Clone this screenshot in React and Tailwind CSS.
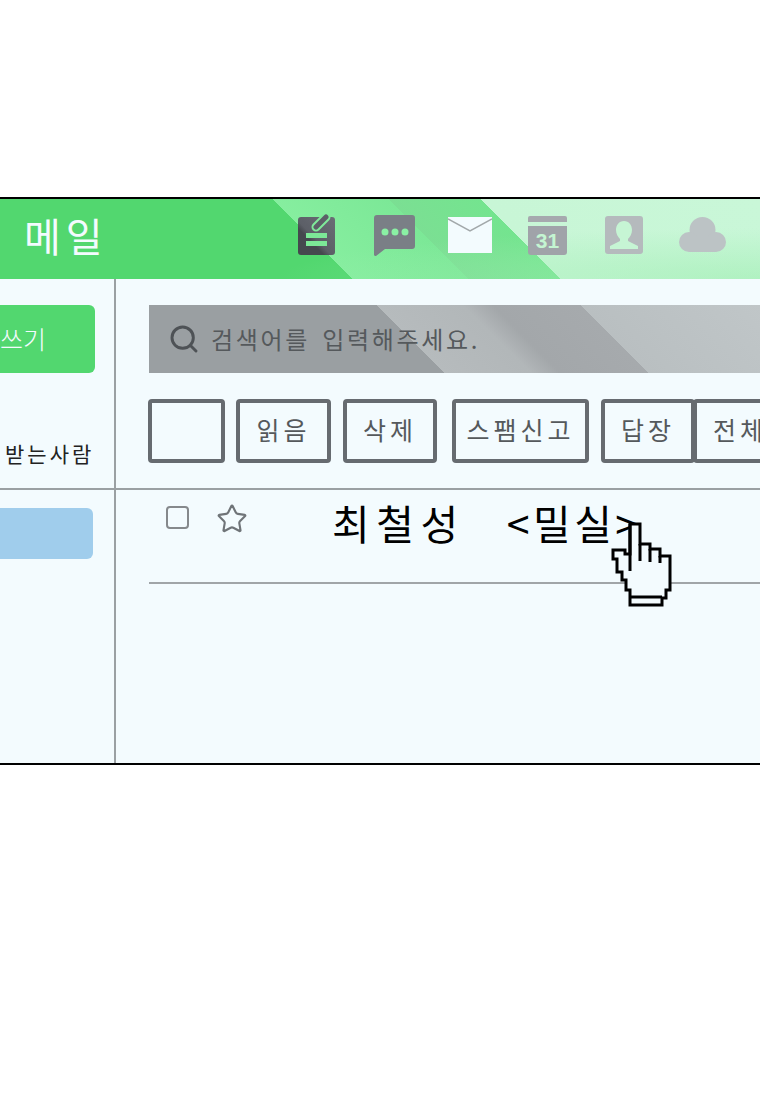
import { Search, Star } from "lucide-react";

const font = { fontFamily: '"Noto Sans CJK KR", "Noto Sans", sans-serif' };

function WriteIcon() {
  return (
    <svg width="38" height="42" viewBox="0 0 38 42">
      <defs>
        <linearGradient id="board" x1="0" y1="1" x2="1" y2="0">
          <stop offset="0.35" stopColor="#45484e" />
          <stop offset="0.45" stopColor="#5c5f67" />
          <stop offset="1" stopColor="#6a6d75" />
        </linearGradient>
      </defs>
      <rect x="0" y="3" width="37" height="38" rx="3" fill="url(#board)" />
      <path d="M18 13L28 3" fill="none" stroke="#7fea9a" strokeWidth="9" strokeLinecap="round" />
      <path d="M18 13L28 3" fill="none" stroke="#5c5f67" strokeWidth="5" strokeLinecap="round" />
      <rect x="8" y="19" width="21" height="5" fill="#7ce897" />
      <rect x="8" y="27" width="21" height="5" fill="#7ce897" />
    </svg>
  );
}

function ChatIcon() {
  return (
    <svg width="41" height="41" viewBox="0 0 41 41">
      <path d="M3 0h35a3 3 0 0 1 3 3v28a3 3 0 0 1-3 3H11l-9 7a2 2 0 0 1-2-1V3a3 3 0 0 1 3-3z" fill="#7a7f86" />
      <circle cx="11" cy="17" r="3.5" fill="#8af0a4" />
      <circle cx="21" cy="17" r="3.5" fill="#8af0a4" />
      <circle cx="31" cy="17" r="3.5" fill="#8af0a4" />
    </svg>
  );
}

function MailIcon() {
  return (
    <svg width="44" height="36" viewBox="0 0 44 36">
      <rect width="44" height="36" fill="#f3fbfe" />
      <path d="M0 2l22 12L44 2" fill="none" stroke="#a2a8aa" strokeWidth="1.5" />
    </svg>
  );
}

function CalendarIcon() {
  return (
    <svg width="39" height="39" viewBox="0 0 39 39">
      <path d="M2 0h35a2 2 0 0 1 2 2v4H0V2a2 2 0 0 1 2-2z" fill="#a6a9ae" />
      <path d="M0 10h39v26a3 3 0 0 1-3 3H3a3 3 0 0 1-3-3z" fill="#a0a3a9" />
      <text x="19.5" y="32" textAnchor="middle" fontSize="21" fontWeight="700" fill="#c4f5d2" fontFamily="Liberation Sans, sans-serif">31</text>
    </svg>
  );
}

function ContactIcon() {
  return (
    <svg width="38" height="38" viewBox="0 0 38 38">
      <rect width="38" height="38" rx="3" fill="#b5babd" />
      <path d="M19 5c5 0 8 4 8 9 0 4-2 7-4 9v2l10 5v3H5v-3l10-5v-2c-2-2-4-5-4-9 0-5 3-9 8-9z" fill="#c6f5d4" />
    </svg>
  );
}

function CloudIcon() {
  return (
    <svg width="47" height="36" viewBox="0 0 47 36" fill="#bcc3c5">
      <circle cx="23.5" cy="13" r="13" />
      <circle cx="10" cy="25" r="10" />
      <circle cx="37" cy="25" r="10" />
      <rect x="10" y="20" width="27" height="15" />
    </svg>
  );
}

function HandCursor() {
  return (
    <svg className="absolute left-[611px] top-[522px]" width="62" height="86" viewBox="611 522 62 86">
      <path
        d="M630 524h10v20h10v5h10v7h10v34h-4v8h-4v7h-32v-15h-4v-10h-4v-8h-5v-13h-4v-9h12v4h5z"
        fill="#f3fbfe"
        stroke="#000"
        strokeWidth="3"
      />
      <path d="M630 524v47M640 544v17M650 549v13M660 556v7M631 597h31" fill="none" stroke="#000" strokeWidth="3" />
    </svg>
  );
}

function ToolButton({ className, children }) {
  return (
    <div className={`flex h-[64px] shrink-0 items-center justify-center rounded-[4px] border-[4px] border-[#666b70] pb-[2px] text-[25px] tracking-[4px] text-[#55595c] ${className}`}>
      {children}
    </div>
  );
}

export default function App() {
  return (
    <div className="relative h-[1099px] w-[760px] overflow-hidden bg-white pt-[197px]" style={font}>
      <div className="h-[568px] border-y-2 border-black bg-[#f3fbfe]">
        <header className="flex h-[80px] items-center bg-[radial-gradient(ellipse_at_100%_100%,#9feeb299,transparent_45%),linear-gradient(45deg,#52d76f_249px,#86ee9f_249px,#7ce897_331px,#7bdf93_331px,#74e48f_396px,#c8f6d6_396px,#c9f7d8_593px)] pb-[8px] pl-[24px]">
          <h1 className="w-[274px] text-[40px] font-normal leading-none tracking-[5px] text-[#f3fbfe]">메일</h1>
          <WriteIcon />
          <div className="ml-[38px]"><ChatIcon /></div>
          <div className="ml-[33px]"><MailIcon /></div>
          <div className="ml-[36px]"><CalendarIcon /></div>
          <div className="ml-[38px]"><ContactIcon /></div>
          <div className="ml-[36px]"><CloudIcon /></div>
        </header>

        <div className="flex h-[484px]">
          <aside className="flex w-[116px] shrink-0 flex-col overflow-hidden border-r-2 border-[#9aa0a3]">
            <div className="mt-[26px] flex h-[68px] w-[95px] items-center justify-end rounded-r-[6px] bg-[#52d76f] pr-[49px] text-[25px] font-light whitespace-nowrap text-[#f3fbfe]">
              메일쓰기
            </div>
            <div className="mt-[65px] pl-[5px] text-[21px] leading-[30px] tracking-[3px] whitespace-nowrap text-[#222]">받는사람</div>
            <div className="mt-[20px] h-[2px] w-full bg-[#9aa0a3]" />
            <div className="mt-[18px] h-[51px] w-[93px] rounded-r-[6px] bg-[#a0cdec]" />
          </aside>

          <main className="min-w-0 flex-1 overflow-hidden">
            <div className="pl-[33px] pt-[26px]">
              <div className="flex h-[68px] w-[611px] items-center bg-[linear-gradient(45deg,#9a9fa2_209px,#b6bbbd_209px,#b2b7b9_270px,#a3a7aa_291px,#a6aaad_353px,#b9bfc1_353px,#c0c6c8_480px)] pl-[19px]">
                <Search size={32} strokeWidth={2.2} className="shrink-0 text-[#4e5256]" />
                <span className="ml-[11px] text-[24px] tracking-[2.7px] whitespace-pre text-[#55595c]">검색어를</span>
                <span className="ml-[12px] text-[24px] tracking-[2.7px] whitespace-pre text-[#55595c]">입력해주세요.</span>
              </div>
            </div>

            <div className="flex pl-[32px] pt-[26px]">
              <ToolButton className="w-[77px]" />
              <ToolButton className="ml-[11px] w-[95px]">읽음</ToolButton>
              <ToolButton className="ml-[12px] w-[94px]">삭제</ToolButton>
              <ToolButton className="ml-[15px] w-[137px]">스팸신고</ToolButton>
              <ToolButton className="ml-[12px] w-[94px]">답장</ToolButton>
              <ToolButton className="ml-[-2px] w-[95px] justify-start pl-[16px] whitespace-nowrap">전체</ToolButton>
            </div>

            <div className="mt-[25px] h-[2px] bg-[#9aa0a3]" />

            <div className="ml-[33px] flex h-[94px] items-start border-b-2 border-[#a0a5a8]">
              <div className="ml-[17px] mt-[16px] h-[23px] w-[23px] rounded-[4px] border-2 border-[#85898c]" />
              <Star size={32} strokeWidth={1.6} className="ml-[27px] mt-[13px] text-[#6f7478]" />
              <div className="ml-[84px] mt-[2px] text-[41px] leading-[60px] whitespace-pre text-black">
                <span className="tracking-[6.5px]">최철성</span>
                <span className="ml-[42px] tracking-[3.5px]">&lt;밀실&gt;</span>
              </div>
            </div>
          </main>
        </div>
      </div>
      <HandCursor />
    </div>
  );
}
